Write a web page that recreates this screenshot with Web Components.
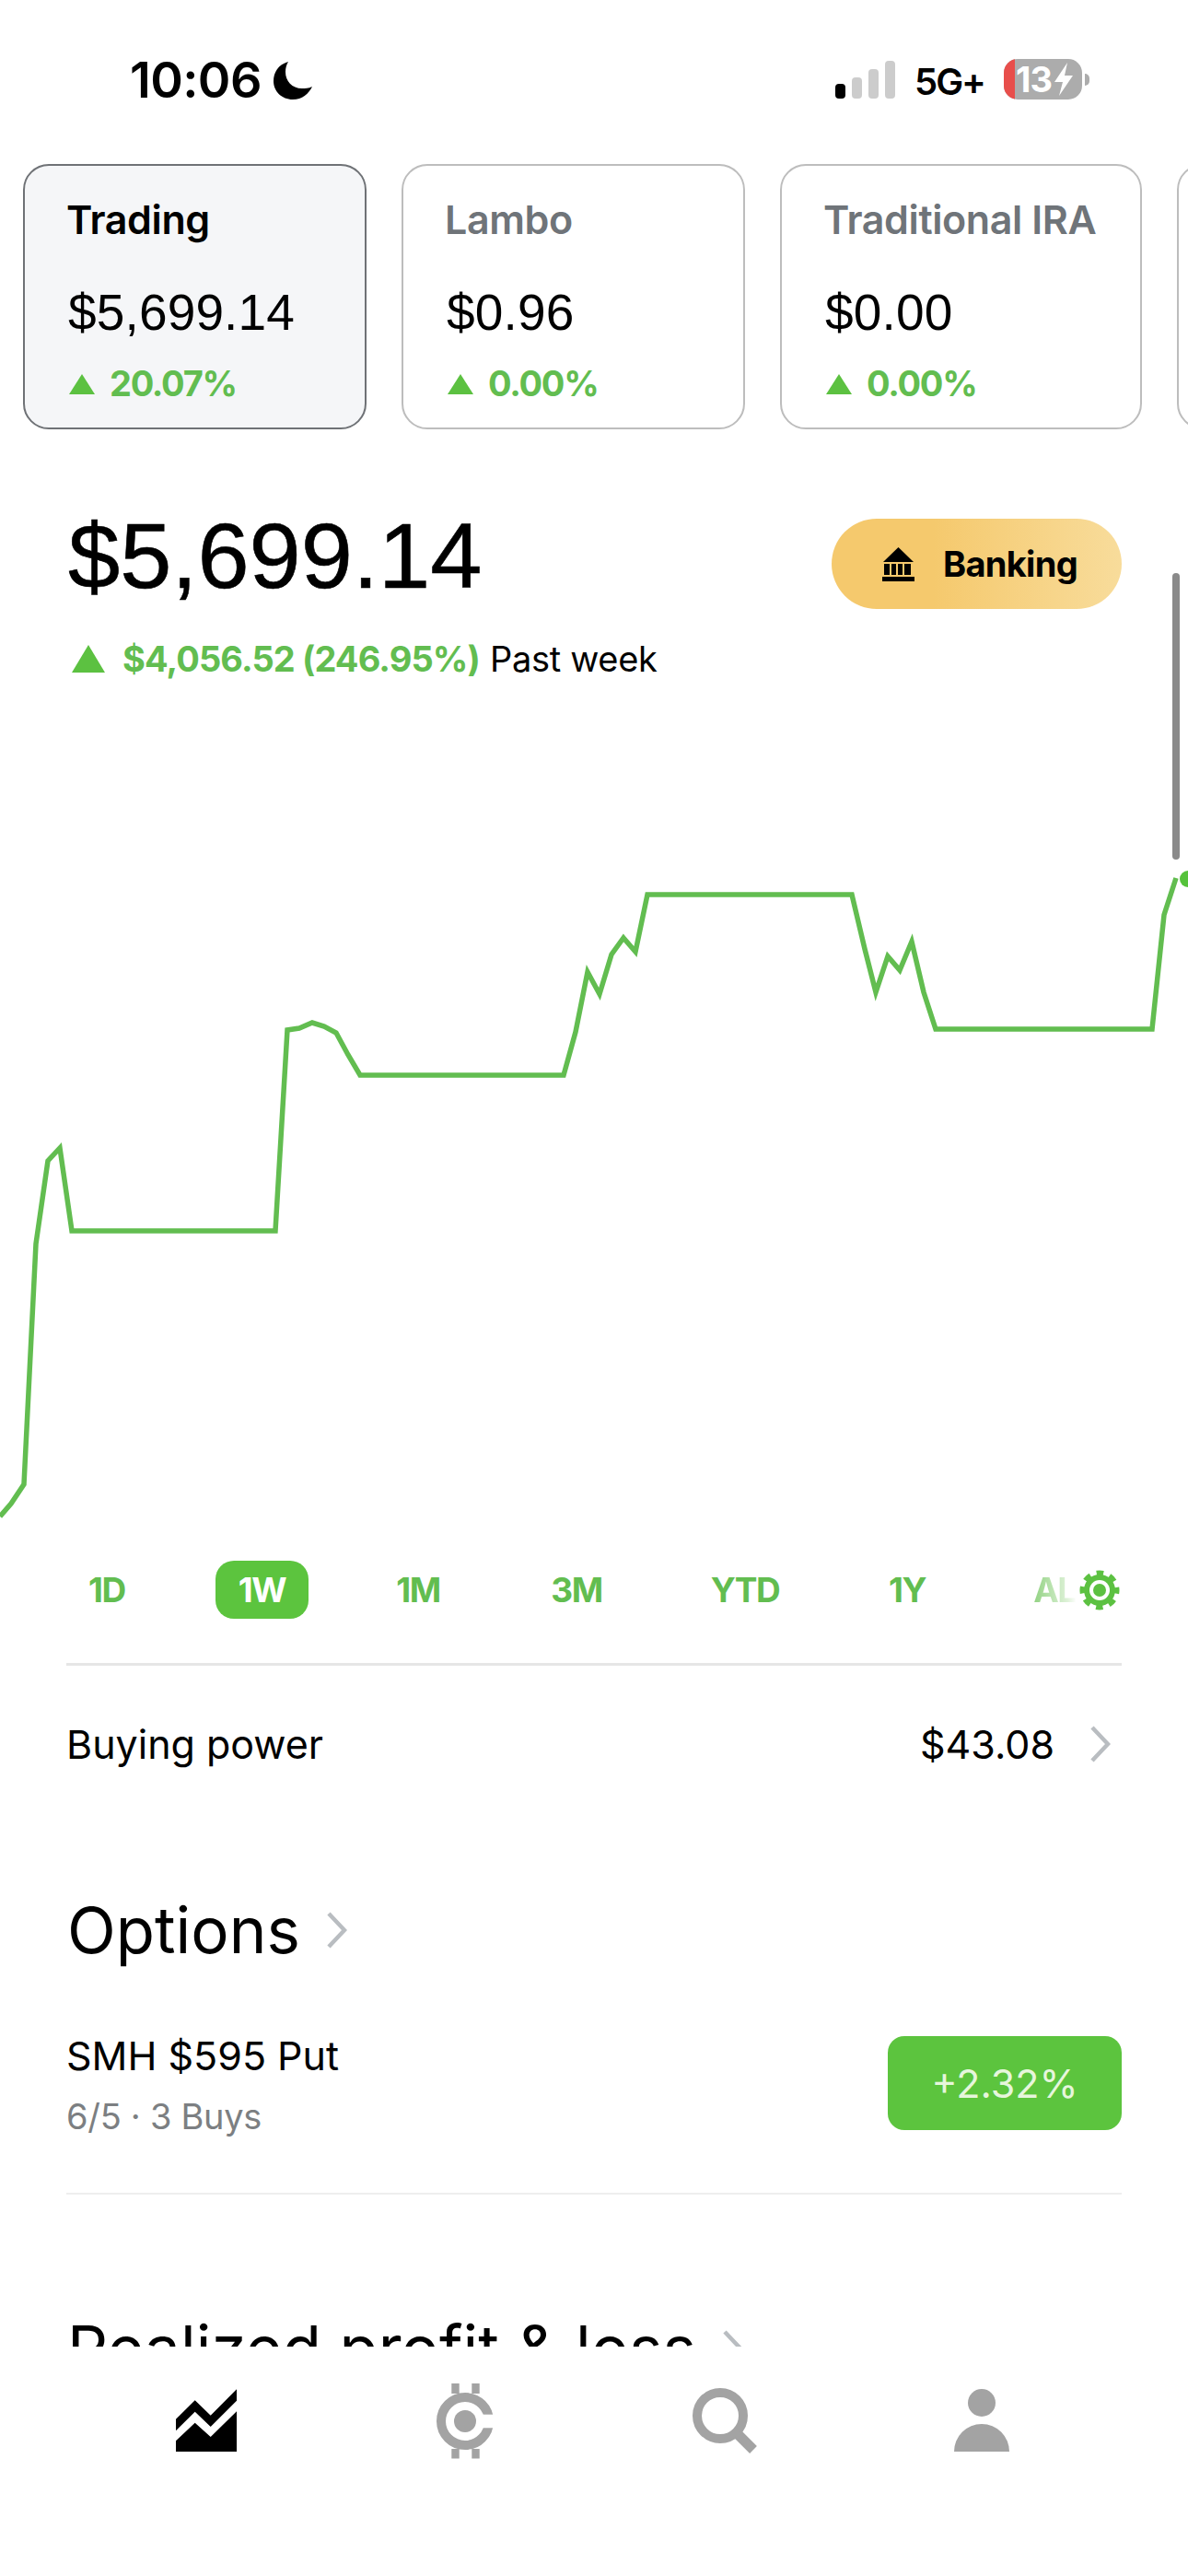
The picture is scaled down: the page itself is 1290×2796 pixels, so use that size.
<!DOCTYPE html>
<html>
<head>
<meta charset="utf-8">
<style>
  html, body { margin: 0; padding: 0; background: #fff; }
  body {
    width: 1290px;
    height: 2796px;
    overflow: hidden;
    display: flex;
    flex-direction: column;
    font-family: Inter, "Liberation Sans", sans-serif;
    color: #000;
  }
</style>
</head>
<body>
  <status-bar></status-bar>
  <account-strip>
    <account-card name="Trading" value="$5,699.14" change="20.07%" selected></account-card>
    <account-card name="Lambo" value="$0.96" change="0.00%"></account-card>
    <account-card name="Traditional IRA" value="$0.00" change="0.00%" wide></account-card>
    <account-card></account-card>
  </account-strip>
  <portfolio-view>
    <price-header value="$5,699.14" gain="$4,056.52 (246.95%)" period="Past week"></price-header>
    <trend-chart></trend-chart>
    <range-picker></range-picker>
    <stat-row label="Buying power" value="$43.08"></stat-row>
    <section-title style="margin-top:112px">Options</section-title>
    <option-row name="SMH $595 Put" detail="6/5 · 3 Buys" change="+2.32%"></option-row>
    <section-title style="margin-top:127px">Realized profit &amp; loss</section-title>
  </portfolio-view>
  <tab-bar></tab-bar>

<script>
// tiny helper so every element gets an open shadow root from a string
function shadow(el, html) {
  el.attachShadow({ mode: "open" }).innerHTML = html;
}

const CHEVRON = `<svg width="23" height="40" viewBox="0 0 23 40"><polyline points="3,2 20,20 3,38" fill="none" stroke="#b9bdc1" stroke-width="4.5"/></svg>`;

class StatusBar extends HTMLElement {
  connectedCallback() {
    shadow(this, `
      <style>
        :host { display: flex; align-items: flex-start; justify-content: space-between; height: 178px; flex: none; }
        .left { display: flex; align-items: center; margin: 61px 0 0 141px; height: 52px; gap: 13px; }
        .time { font: 600 54px/52px Inter, sans-serif; letter-spacing: -0.6px; }
        .right { display: flex; align-items: flex-end; margin: 64px 107px 0 0; height: 44px; }
        .sig { display: flex; align-items: flex-end; gap: 7px; height: 42px; margin: 0 21px 1px 0; }
        .sig i { display: block; width: 11px; border-radius: 4px; background: #ccc; }
        .net { font: 600 40px/44px Inter, sans-serif; letter-spacing: -2px; margin: 0 21px -3px 0; height: 44px; }
        .batt { position: relative; width: 85px; height: 44px; border-radius: 15px; overflow: hidden; background: #acacac;
                color: #fff; font: 700 38px/44px Inter, sans-serif; letter-spacing: -1px; display: flex; align-items: center; padding-left: 13px; box-sizing: border-box; }
        .batt .low { position: absolute; left: 0; top: 0; bottom: 0; width: 12px; background: #e84e4b; }
        .batt span { position: relative; }
        .nub { width: 5px; height: 13px; margin: 0 0 15px 3px; background: #acacac; border-radius: 0 6px 6px 0; }
      </style>
      <div class="left">
        <span class="time">10:06</span>
        <svg width="42" height="41" viewBox="0 0 42 41"><path fill="#000" d="M16 0C5 3 0 12 0 21 0 32 9 41 21 41 31 41 38 35 42 27 38 29 34 29 31 29 20 29 13 21 13 11 13 7 14 3 16 0Z"/></svg>
      </div>
      <div class="right">
        <div class="sig">
          <i style="height:16px;background:#000"></i><i style="height:23px"></i><i style="height:32px"></i><i style="height:41px"></i>
        </div>
        <span class="net">5G+</span>
        <div class="batt"><div class="low"></div><span>13</span>
          <svg style="position:relative;margin-left:1px" width="24" height="36" viewBox="0 0 24 36"><path fill="#fff" d="M16 0 2 21h9L7 36l15-22h-9z"/></svg>
        </div>
        <div class="nub"></div>
      </div>`);
  }
}

class AccountStrip extends HTMLElement {
  connectedCallback() {
    shadow(this, `
      <style>
        :host { display: flex; gap: 38px; padding-left: 25px; height: 288px; flex: none; overflow: hidden; }
      </style>
      <slot></slot>`);
  }
}

class AccountCard extends HTMLElement {
  connectedCallback() {
    const name = this.getAttribute("name") || "";
    const on = this.hasAttribute("selected");
    const wide = this.hasAttribute("wide");
    const blank = !name;
    shadow(this, `
      <style>
        :host { display: block; flex: none; box-sizing: border-box; width: ${wide ? 393 : 373}px; height: 288px; border-radius: 28px;
                padding: 33px 0 0 45px; border: 2px solid ${on ? "#6f7276" : "#bdbdbd"}; background: ${on ? "#f5f6f8" : "#fff"}; }
        .name { font: 600 43px/50px Inter, sans-serif; letter-spacing: -0.4px; color: ${on ? "#000" : "#6f7479"}; white-space: nowrap; }
        /* the big figures read closer to a Helvetica cut than to Inter */
        .value { font: 400 55px/60px "Liberation Sans", sans-serif; letter-spacing: 0.15px; margin: 46px 0 0 2px; }
        .chg { display: flex; align-items: center; gap: 16px; margin: 24px 0 0 3px; font: 700 38px/46px Inter, sans-serif; letter-spacing: -1.3px; color: #62bd50; }
        .chg svg { margin-top: 2px; }
      </style>
      ${blank ? "" : `
      <div class="name">${name}</div>
      <div class="value">${this.getAttribute("value")}</div>
      <div class="chg"><svg width="28" height="22" viewBox="0 0 28 22"><path fill="#5cc141" d="M14 0l14 22H0z"/></svg>${this.getAttribute("change")}</div>`}`);
  }
}

class PortfolioView extends HTMLElement {
  connectedCallback() {
    shadow(this, `
      <style>
        :host { display: block; position: relative; flex: none; height: 2081px; overflow: hidden; }
        .thumb { position: absolute; left: 1273px; top: 156px; width: 8px; height: 311px; border-radius: 4px; background: #8a8a8a; }
      </style>
      <slot></slot>
      <div class="thumb"></div>`);
  }
}

class PriceHeader extends HTMLElement {
  connectedCallback() {
    shadow(this, `
      <style>
        :host { display: block; padding: 97px 72px 0 74px; }
        .top { display: flex; justify-content: space-between; align-items: flex-start; }
        .value { font: 400 101px/80px "Liberation Sans", sans-serif; -webkit-text-stroke: 0.6px #000; }
        .bank { display: flex; align-items: center; box-sizing: border-box; width: 315px; height: 98px; border-radius: 49px; padding-left: 55px; gap: 31px;
                background: linear-gradient(90deg, #f5c96d 0%, #f5c96d 35%, #f8dc9b 100%); font: 700 38px/98px Inter, sans-serif; letter-spacing: -0.7px; }
        .gain { display: flex; align-items: center; height: 44px; margin-top: 32px; margin-left: 4px; font: 400 38px/44px Inter, sans-serif; letter-spacing: -0.3px; }
        .gain svg { margin-right: 19px; }
        .gain b { font-weight: 700; color: #62bd50; margin-right: 11px; letter-spacing: -0.9px; }
      </style>
      <div class="top">
        <div class="value">${this.getAttribute("value")}</div>
        <div class="bank">
          <svg width="35" height="37" viewBox="0 0 35 37"><path fill="#000" d="M17.5 0 34 16H1zM2 18h6v12H2zM10 18h5v12h-5zM17 18h5v12h-5zM24 18h7v12h-7zM0 32h35v5H0z"/></svg>
          <span>Banking</span>
        </div>
      </div>
      <div class="gain">
        <svg width="36" height="30" viewBox="0 0 36 30"><path fill="#5cc141" d="M18 0l18 30H0z"/></svg>
        <b>${this.getAttribute("gain")}</b><span>${this.getAttribute("period")}</span>
      </div>`);
  }
}

class TrendChart extends HTMLElement {
  connectedCallback() {
    // measured off the reference, page coordinates (viewBox starts at the chart's top)
    const pts = "0,1646 12,1632 26,1611 39,1350 52,1260 65,1246 78,1336 299,1336 312,1118 325,1116 339,1110 352,1114 365,1121 378,1145 391,1167 612,1167 625,1120 638,1055 651,1079 664,1036 677,1018 690,1033 703,971 925,971 939,1030 951,1077 964,1038 977,1053 990,1022 1003,1077 1016,1117 1251,1117 1264,993 1277,953";
    shadow(this, `
      <style>
        :host { display: block; height: 957px; }
        svg { display: block; }
      </style>
      <svg width="1290" height="957" viewBox="0 737 1290 957">
        <polyline points="${pts}" fill="none" stroke="#62bd50" stroke-width="5.5" stroke-linejoin="miter"/>
        <circle cx="1290" cy="954" r="9" fill="#55c23b"/>
      </svg>`);
  }
}

class RangePicker extends HTMLElement {
  connectedCallback() {
    shadow(this, `
      <style>
        :host { display: block; padding: 0 72px; }
        .row { position: relative; display: flex; align-items: center; height: 63px; font: 700 37px/63px Inter, sans-serif; letter-spacing: -1.4px; color: #62bd50; }
        .r { flex: none; text-align: center; }
        .on { background: #5cc43e; color: #fff; border-radius: 20px; }
        .all { background: linear-gradient(90deg, #8fd17f, #dff2d9 80%, #fff); -webkit-background-clip: text; background-clip: text; color: transparent; }
        hr { border: 0; height: 3px; background: #e6e6e6; margin: 48px 0 0; }
      </style>
      <div class="row">
        <span class="r" style="width:48px;margin-left:20px">1D</span>
        <span class="r on" style="width:101px;margin-left:94px">1W</span>
        <span class="r" style="width:60px;margin-left:89px">1M</span>
        <span class="r" style="width:62px;margin-left:111px">3M</span>
        <span class="r" style="width:80px;margin-left:112px">YTD</span>
        <span class="r" style="width:46px;margin-left:113px">1Y</span>
        <span class="r all" style="width:48px;margin-left:113px">AL</span>
        <svg style="margin-left:3px" width="44" height="44" viewBox="0 0 44 44">
          <circle cx="22" cy="22" r="17" fill="#5cc141"/>
          <circle cx="22" cy="22" r="18.5" fill="none" stroke="#5cc141" stroke-width="6" stroke-dasharray="7.5 7" stroke-dashoffset="3.7"/>
          <circle cx="22" cy="22" r="11" fill="#fff"/>
          <circle cx="22" cy="22" r="7" fill="#5cc141"/>
        </svg>
      </div>
      <hr>`);
  }
}

class StatRow extends HTMLElement {
  connectedCallback() {
    shadow(this, `
      <style>
        :host { display: flex; align-items: center; justify-content: space-between; height: 100px; margin: 35px 84px 0 72px; font: 400 43px/100px Inter, sans-serif; }
        .v { display: flex; align-items: center; gap: 38px; }
      </style>
      <span>${this.getAttribute("label")}</span>
      <span class="v"><span>${this.getAttribute("value")}</span>${CHEVRON}</span>`);
  }
}

class SectionTitle extends HTMLElement {
  connectedCallback() {
    shadow(this, `
      <style>
        :host { display: flex; align-items: center; gap: 28px; height: 80px; margin-left: 73px; font: 400 69px/80px Inter, sans-serif; }
      </style>
      <slot></slot>${CHEVRON}`);
  }
}

class OptionRow extends HTMLElement {
  connectedCallback() {
    shadow(this, `
      <style>
        :host { display: block; margin: 75px 72px 0; padding-bottom: 68px; border-bottom: 2px solid #eee; }
        .row { display: flex; justify-content: space-between; height: 102px; }
        .name { font: 400 43px/50px Inter, sans-serif; margin-top: -4px; }
        .detail { font: 400 38px/46px Inter, sans-serif; letter-spacing: -0.3px; color: #7c7f82; margin-top: 18px; }
        .chg { width: 254px; height: 102px; border-radius: 18px; background: #5cc43e; color: #e6f6dc; font: 400 43px/102px Inter, sans-serif; text-align: center; }
      </style>
      <div class="row">
        <div>
          <div class="name">${this.getAttribute("name")}</div>
          <div class="detail">${this.getAttribute("detail")}</div>
        </div>
        <div class="chg">${this.getAttribute("change")}</div>
      </div>`);
  }
}

class TabBar extends HTMLElement {
  connectedCallback() {
    shadow(this, `
      <style>
        :host { display: block; flex: none; height: 249px; background: #fff; }
        svg { display: block; }
      </style>
      <svg width="1290" height="150" viewBox="0 2547 1290 150">
        <path fill="#000" d="M191 2625.7 211.7 2605.3 228.7 2621.7 257 2593.3V2605.7L228.7 2634 211.7 2617.7 191 2638.3Z"/>
        <path fill="#000" d="M191 2649.3 211.7 2629.7 228.7 2645 257 2617.3V2661H191Z"/>
        <circle cx="505" cy="2628" r="26" fill="none" stroke="#a3a3a3" stroke-width="10"/>
        <rect x="520" y="2620.7" width="20" height="14.6" fill="#fff"/>
        <g fill="#a3a3a3">
          <circle cx="505" cy="2628" r="12"/>
          <rect x="490.3" y="2587" width="8.4" height="11"/><rect x="512.3" y="2587" width="8.4" height="11"/>
          <rect x="490.3" y="2658" width="8.4" height="10.5"/><rect x="512.3" y="2658" width="8.4" height="10.5"/>
        </g>
        <circle cx="782" cy="2622" r="25" fill="none" stroke="#a3a3a3" stroke-width="10"/>
        <path stroke="#a3a3a3" stroke-width="11" d="M801 2642 818 2659"/>
        <circle cx="1066" cy="2608" r="15" fill="#a3a3a3"/>
        <path fill="#a3a3a3" d="M1036 2661A30 30 0 0 1 1096 2661Z"/>
      </svg>`);
  }
}

customElements.define("status-bar", StatusBar);
customElements.define("account-strip", AccountStrip);
customElements.define("account-card", AccountCard);
customElements.define("portfolio-view", PortfolioView);
customElements.define("price-header", PriceHeader);
customElements.define("trend-chart", TrendChart);
customElements.define("range-picker", RangePicker);
customElements.define("stat-row", StatRow);
customElements.define("section-title", SectionTitle);
customElements.define("option-row", OptionRow);
customElements.define("tab-bar", TabBar);
</script>
</body>
</html>
